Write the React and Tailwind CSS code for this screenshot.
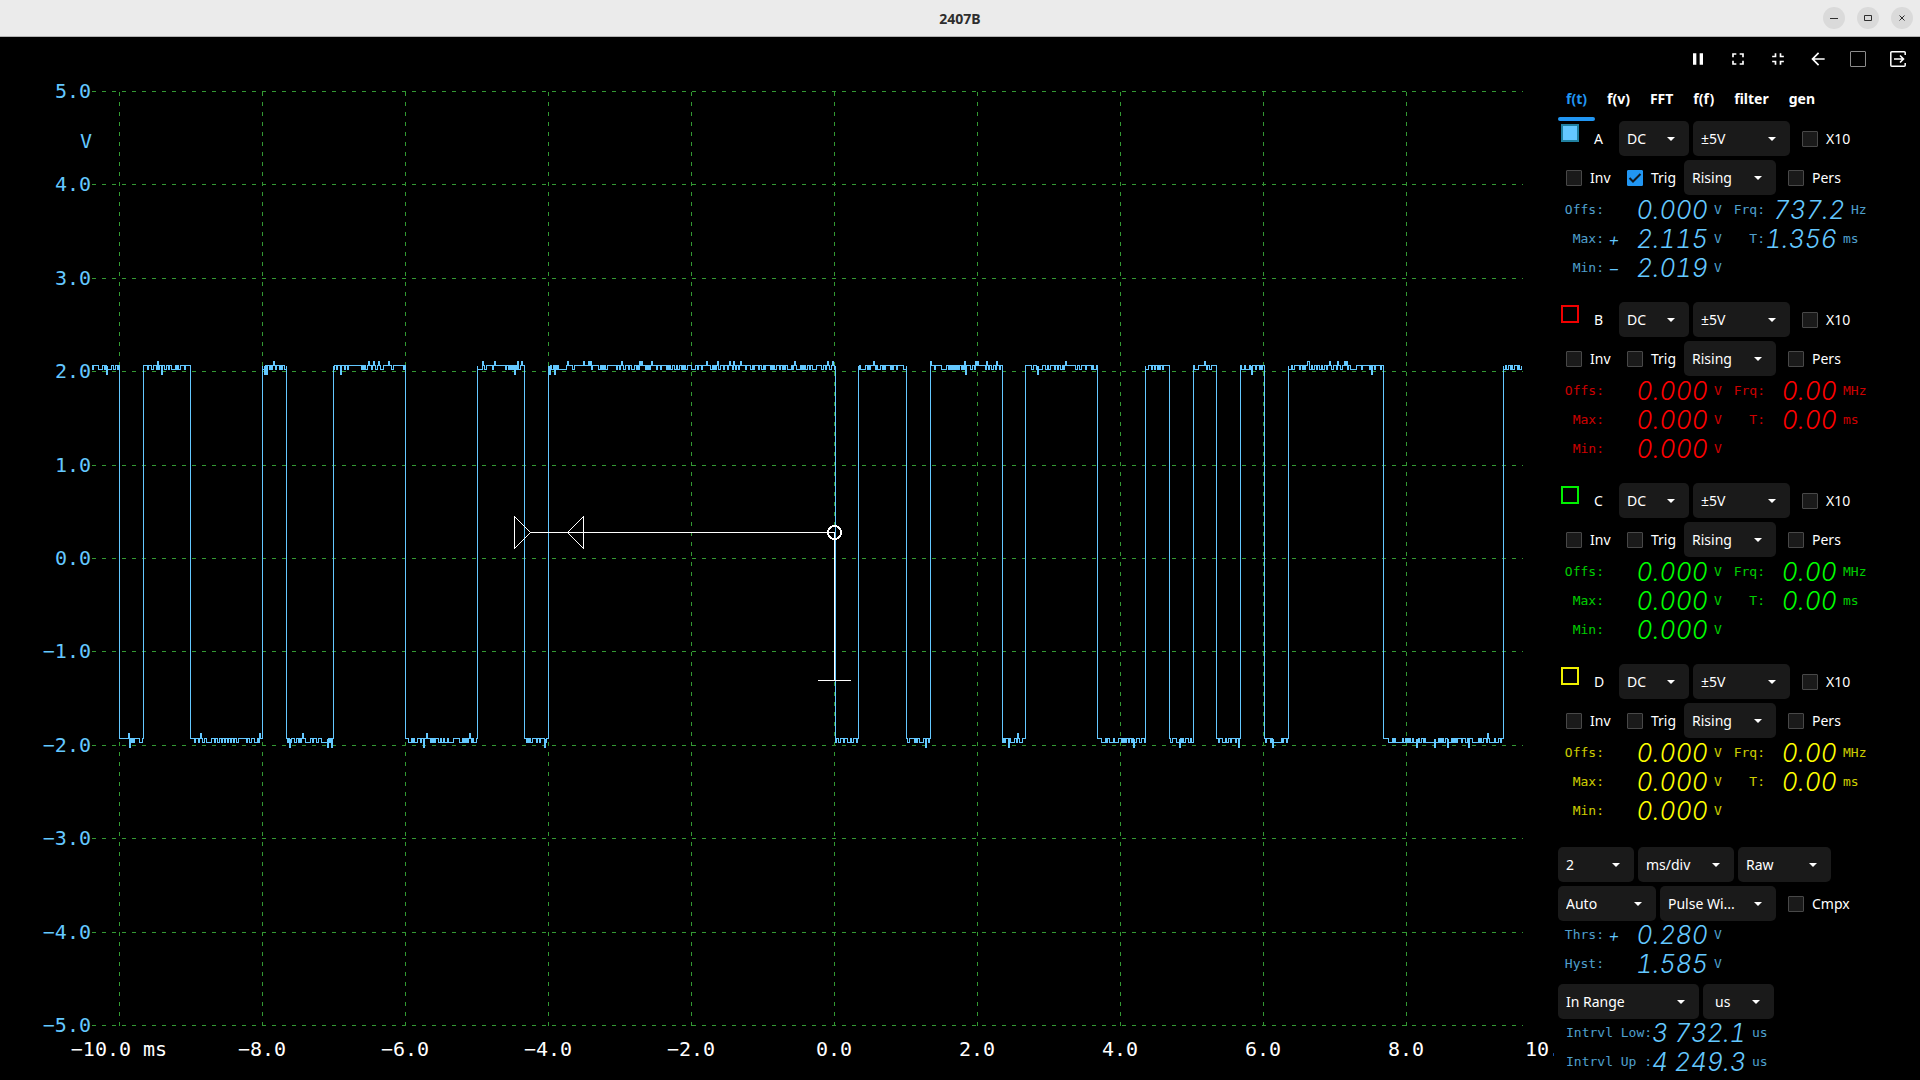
import { useState } from "react";
import clsx from "clsx";
import { MdArrowBack, MdFullscreen, MdFullscreenExit, MdPause } from "react-icons/md";

const HIGH = 365;
const HIGH_DIP = 369;
const LOW = 738;
const LOW_DIP = 742;

// One entry per logic level: from/to in px, then excursions as [start, end, y].
// An excursion without a y goes to the neighbouring ADC step.
const PULSES = [
  { high: true, from: 91, to: 119, steps: [[92, 93], [98, 102], [104, 105], [106, 107, 374], [107, 111], [113, 115], [117, 118]] },
  { high: false, from: 119, to: 143, steps: [[128, 129, 733], [129, 130, 747], [131, 132], [133, 134], [139, 142]] },
  { high: true, from: 143, to: 190, steps: [[147, 148], [151, 153], [156, 157], [157, 158, 361], [158, 159], [161, 162, 374], [164, 166], [168, 169], [171, 175], [176, 177], [178, 180], [184, 185]] },
  { high: false, from: 190, to: 262, steps: [[194, 195], [198, 199], [200, 201, 733], [202, 204], [206, 211], [214, 215], [217, 219], [221, 222], [224, 225], [227, 228], [230, 231], [233, 234], [236, 238], [246, 247], [249, 251], [254, 257], [258, 259], [259, 260, 733]] },
  { high: true, from: 262, to: 286, steps: [[262, 264], [264, 265, 374], [266, 267, 374], [269, 270], [271, 272], [273, 274, 361], [275, 276], [279, 280], [281, 282], [284, 286]] },
  { high: false, from: 286, to: 333, steps: [[287, 288], [289, 290, 747], [290, 291], [294, 296], [298, 299], [300, 301], [302, 303, 733], [305, 310], [312, 313], [316, 318], [321, 327], [327, 328, 747], [329, 330], [331, 332, 747]] },
  { high: true, from: 333, to: 405, steps: [[333, 334], [336, 337], [340, 341, 374], [344, 345], [347, 348], [361, 362], [363, 364], [365, 367], [368, 369, 361], [371, 372], [373, 374, 361], [375, 377], [378, 379, 361], [380, 383], [388, 389, 361], [391, 393], [403, 404]] },
  { high: false, from: 405, to: 477, steps: [[408, 411], [412, 413], [414, 417], [420, 421], [423, 424, 747], [426, 427, 733], [430, 431], [432, 433], [434, 435], [438, 440], [441, 443], [444, 447], [448, 453], [459, 462], [463, 464], [465, 466], [467, 468], [469, 470, 733], [471, 472], [473, 476]] },
  { high: true, from: 477, to: 524, steps: [[477, 482], [482, 483, 361], [484, 486], [492, 493], [494, 495, 361], [505, 506], [508, 509], [510, 511], [512, 513], [514, 515, 374], [516, 517], [517, 518, 361], [518, 520], [521, 522, 361]] },
  { high: false, from: 524, to: 548, steps: [[526, 527], [528, 529], [530, 532], [536, 537], [539, 540], [544, 545, 747], [545, 546]] },
  { high: true, from: 548, to: 835, steps: [[548, 549], [549, 550, 374], [551, 553], [554, 555, 374], [556, 557], [558, 566], [567, 568, 361], [572, 574], [583, 584, 361], [588, 589, 361], [590, 591, 361], [591, 592], [598, 600], [601, 602], [603, 604], [605, 607], [616, 617], [619, 620], [621, 622, 361], [623, 625], [628, 629], [631, 634], [636, 637], [638, 639], [639, 640, 361], [641, 642, 361], [645, 646], [647, 648], [649, 650], [651, 652, 361], [656, 657], [660, 661], [666, 667], [668, 669], [670, 672], [674, 676], [677, 679], [681, 682], [683, 684], [685, 687], [691, 695], [697, 698], [701, 702], [706, 707, 361], [710, 712], [713, 714], [715, 716], [717, 718, 361], [718, 720], [723, 724], [727, 728], [729, 730, 361], [732, 733], [733, 734, 361], [735, 736], [738, 739], [740, 741, 361], [745, 746], [750, 752], [753, 754], [758, 759], [761, 763], [764, 765], [770, 771], [772, 773], [774, 776], [779, 780], [782, 783], [784, 785], [787, 791], [792, 793], [794, 795, 361], [796, 800], [801, 802], [803, 804], [805, 807], [809, 810], [812, 816], [821, 823], [825, 826], [827, 828, 361], [829, 831], [832, 833, 361], [834, 835]] },
  { high: false, from: 835, to: 858, steps: [[835, 836], [838, 840], [843, 844], [847, 850], [851, 853], [856, 857]] },
  { high: true, from: 858, to: 906, steps: [[858, 859], [860, 865], [867, 868], [869, 870], [873, 874, 361], [875, 876], [877, 880], [882, 883], [884, 885], [890, 891], [892, 893], [896, 897], [903, 906]] },
  { high: false, from: 906, to: 930, steps: [[907, 909], [914, 915], [916, 917], [919, 923], [925, 926, 747], [928, 929]] },
  { high: true, from: 930, to: 1002, steps: [[930, 931, 361], [934, 935], [941, 946], [948, 949], [950, 951], [952, 953], [954, 955], [956, 957], [958, 959], [961, 962], [963, 964], [964, 965, 361], [965, 966, 374], [970, 972], [974, 975], [975, 976, 361], [977, 978, 361], [985, 986], [986, 987, 361], [988, 989], [991, 993], [995, 996], [996, 997, 361], [999, 1000]] },
  { high: false, from: 1002, to: 1025, steps: [[1002, 1003], [1004, 1005], [1008, 1009, 747], [1010, 1014], [1016, 1017], [1017, 1018, 733], [1019, 1022]] },
  { high: true, from: 1025, to: 1097, steps: [[1031, 1033], [1036, 1037], [1037, 1038, 374], [1038, 1042], [1045, 1047], [1048, 1050], [1054, 1055], [1057, 1058], [1060, 1062], [1063, 1064], [1065, 1066, 361], [1075, 1077], [1079, 1081], [1085, 1086], [1091, 1092], [1093, 1096]] },
  { high: false, from: 1097, to: 1145, steps: [[1101, 1105], [1106, 1107], [1109, 1113], [1114, 1118], [1121, 1122], [1123, 1124], [1125, 1126], [1128, 1129], [1131, 1132], [1133, 1134, 747], [1134, 1136], [1139, 1141], [1144, 1145]] },
  { high: true, from: 1145, to: 1169, steps: [[1145, 1148], [1151, 1152], [1154, 1155], [1157, 1158], [1159, 1160], [1162, 1163]] },
  { high: false, from: 1169, to: 1193, steps: [[1170, 1172], [1176, 1179], [1179, 1180, 747], [1181, 1182], [1183, 1185], [1188, 1190], [1191, 1193]] },
  { high: true, from: 1193, to: 1216, steps: [[1194, 1198], [1204, 1205, 361], [1206, 1207], [1209, 1211]] },
  { high: false, from: 1216, to: 1240, steps: [[1218, 1219], [1222, 1225], [1226, 1228], [1230, 1231], [1235, 1236], [1238, 1239, 747]] },
  { high: true, from: 1240, to: 1264, steps: [[1241, 1244], [1245, 1249], [1250, 1251], [1251, 1252, 374], [1255, 1256], [1259, 1260], [1261, 1262]] },
  { high: false, from: 1264, to: 1288, steps: [[1265, 1266], [1270, 1271], [1272, 1273, 747], [1273, 1281], [1282, 1283], [1286, 1287]] },
  { high: true, from: 1288, to: 1383, steps: [[1288, 1291], [1292, 1294], [1299, 1300], [1302, 1303], [1304, 1305], [1307, 1309, 361], [1309, 1311], [1312, 1314], [1316, 1317], [1319, 1321], [1322, 1324], [1326, 1327], [1329, 1330, 361], [1331, 1333], [1336, 1337], [1337, 1338, 361], [1340, 1342], [1344, 1345, 361], [1346, 1347, 361], [1347, 1348], [1350, 1356], [1361, 1362], [1369, 1370], [1371, 1372, 374], [1374, 1375], [1380, 1381]] },
  { high: false, from: 1383, to: 1503, steps: [[1388, 1392], [1393, 1394], [1395, 1402], [1403, 1405], [1406, 1407], [1408, 1409], [1410, 1412], [1413, 1416], [1416, 1417, 747], [1417, 1418], [1419, 1421], [1423, 1424], [1425, 1434], [1434, 1435, 747], [1435, 1438], [1439, 1440], [1441, 1442], [1443, 1445], [1447, 1448, 747], [1448, 1451], [1452, 1453], [1454, 1455], [1456, 1457], [1461, 1462], [1465, 1467], [1468, 1469, 747], [1472, 1478], [1479, 1480], [1481, 1483], [1486, 1487], [1487, 1488, 733], [1489, 1494], [1495, 1498], [1500, 1501]] },
  { high: true, from: 1503, to: 1521, steps: [[1503, 1505], [1506, 1508], [1510, 1511], [1512, 1514], [1517, 1518], [1519, 1521]] }
];

const TRACE = PULSES.reduce((path, pulse) => {
  const rest = pulse.high ? HIGH : LOW;
  const dip = pulse.high ? HIGH_DIP : LOW_DIP;
  const steps = pulse.steps.map(([a, b, y]) => `H${a}V${y || dip}H${b}V${rest}`).join("");
  const start = path ? `H${pulse.from}V${rest}` : `M${pulse.from} ${rest}`;
  return `${path}${start}${steps}H${pulse.to}`;
}, "");

const VOLT_TICKS = [
  { y: 91, label: "5.0" },
  { y: 184, label: "4.0" },
  { y: 278, label: "3.0" },
  { y: 371, label: "2.0" },
  { y: 465, label: "1.0" },
  { y: 558, label: "0.0" },
  { y: 651, label: "−1.0" },
  { y: 745, label: "−2.0" },
  { y: 838, label: "−3.0" },
  { y: 932, label: "−4.0" },
  { y: 1025, label: "−5.0" }
];

const TIME_TICKS = [
  { x: 119, label: "−10.0 ms" },
  { x: 262, label: "−8.0" },
  { x: 405, label: "−6.0" },
  { x: 548, label: "−4.0" },
  { x: 691, label: "−2.0" },
  { x: 834, label: "0.0" },
  { x: 977, label: "2.0" },
  { x: 1120, label: "4.0" },
  { x: 1263, label: "6.0" },
  { x: 1406, label: "8.0" }
];

const ZERO = [
  { label: "Offs:", value: "0.000", unit: "V", label2: "Frq:", value2: "0.00", unit2: "MHz" },
  { label: "Max:", value: "0.000", unit: "V", label2: "T:", value2: "0.00", unit2: "ms" },
  { label: "Min:", value: "0.000", unit: "V" }
];

const CHANNELS = [
  {
    name: "A",
    on: true,
    trig: true,
    text: "text-[#64c8ff]",
    box: "border-[#2080a0] checked:bg-[#64c8ff]",
    rows: [
      { label: "Offs:", value: "0.000", unit: "V", label2: "Frq:", value2: "737.2", unit2: "Hz", wide: true },
      { label: "Max:", sign: "+", value: "2.115", unit: "V", label2: "T:", value2: "1.356", unit2: "ms" },
      { label: "Min:", sign: "−", value: "2.019", unit: "V" }
    ]
  },
  { name: "B", text: "text-[#ff0000]", box: "border-[#f00000] checked:bg-[#ff0000]", rows: ZERO },
  { name: "C", text: "text-[#00ff00]", box: "border-[#00f000] checked:bg-[#00ff00]", rows: ZERO },
  { name: "D", text: "text-[#ffff00]", box: "border-[#f0f000] checked:bg-[#ffff00]", rows: ZERO }
];

const TABS = ["f(t)", "f(v)", "FFT", "f(f)", "filter", "gen"];

function TitleBar() {
  return (
    <header className="grid h-[37px] grid-cols-[1fr_auto_1fr] items-center border-b border-[#b4b4b4] bg-[#ebebeb] px-[7px] text-[#2e2e2e]">
      <span />
      <h1 className="pt-0.5 text-sm font-bold">2407B</h1>
      <div className="flex justify-end gap-3">
        <WindowButton label="Minimize">
          <path d="M7 11.5h8" />
        </WindowButton>
        <WindowButton label="Maximize">
          <path d="M7.5 8.5h7v5h-7z" />
        </WindowButton>
        <WindowButton label="Close">
          <path d="M8.5 8.5l5 5M13.5 8.5l-5 5" />
        </WindowButton>
      </div>
    </header>
  );
}

function WindowButton({ label, children }) {
  return (
    <button type="button" aria-label={label} className="h-[22px] w-[22px] rounded-full bg-[#dadada]">
      <svg viewBox="0 0 22 22" className="h-full w-full fill-none stroke-current">
        {children}
      </svg>
    </button>
  );
}

function Plot() {
  return (
    <svg
      viewBox="0 37 1554 1043"
      className="block h-auto w-full font-['DejaVu_Sans_Mono',monospace] text-[20px]"
      role="img"
      aria-label="Channel A voltage over time"
    >
      <g transform="translate(0.5 0.5)" fill="none" shapeRendering="crispEdges">
        <g stroke="#339933" strokeDasharray="4 6">
          {VOLT_TICKS.map((t) => (
            <path key={t.y} d={`M91 ${t.y}H1522`} />
          ))}
          {TIME_TICKS.map((t) => (
            <path key={t.x} d={`M${t.x} 91V1025`} />
          ))}
        </g>
        <path d={TRACE} stroke="#64c8ff" />
        <g stroke="#ffffff">
          <path d="M514 516V548L530 532Z" />
          <path d="M583 516V548L567 532Z" />
          <path d="M530 532H834V680" />
          <path d="M817 680H850" />
          <circle cx="834" cy="532" r="6.5" strokeWidth="2" />
        </g>
      </g>
      <g fill="#64c8ff" textAnchor="end">
        {VOLT_TICKS.map((t) => (
          <text key={t.y} x="91" y={t.y + 7}>{t.label}</text>
        ))}
        <text x="92" y="148">V</text>
      </g>
      <g fill="#ffffff" textAnchor="middle">
        {TIME_TICKS.map((t) => (
          <text key={t.x} x={t.x} y="1056">{t.label}</text>
        ))}
        <text x="1525" y="1056" textAnchor="start">10.0</text>
      </g>
    </svg>
  );
}

function Toolbar() {
  const button = "flex h-10 w-10 items-center justify-center";
  return (
    <div className="flex h-11 items-center justify-end pr-0.5">
      <button type="button" aria-label="Pause" className={button}>
        <MdPause size={20} />
      </button>
      <button type="button" aria-label="Full screen" className={button}>
        <MdFullscreen size={20} />
      </button>
      <button type="button" aria-label="Exit full screen" className={button}>
        <MdFullscreenExit size={20} />
      </button>
      <button type="button" aria-label="Back" className={button}>
        <MdArrowBack size={20} />
      </button>
      <label className={button}>
        <input
          type="checkbox"
          aria-label="Select"
          className="h-4 w-4 appearance-none rounded-[1px] border border-[#8c8c8c] checked:bg-[#2196f3]"
        />
      </label>
      <button type="button" aria-label="Exit" className={button}>
        <svg viewBox="0 0 16 16" className="h-4 w-4 fill-none stroke-current">
          <path d="M15.2 4V1.8Q15.2 0.8 14.2 0.8H1.8Q0.8 0.8 0.8 1.8V14.2Q0.8 15.2 1.8 15.2H14.2Q15.2 15.2 15.2 14.2V12" strokeWidth="1.5" />
          <path d="M4 8H13.5M10 4.5L13.5 8L10 11.5" strokeWidth="1.6" />
        </svg>
      </button>
    </div>
  );
}

function Select({ label, value, inset = "pl-2", className }) {
  return (
    <span className={clsx("relative block h-[35px]", className)}>
      <select
        aria-label={label}
        defaultValue={value}
        className={clsx("h-full w-full appearance-none rounded-[5px] bg-[#1a1a1a] text-sm text-white outline-none", inset)}
      >
        <option>{value}</option>
      </select>
      <svg viewBox="0 0 8 4" className="pointer-events-none absolute top-4 right-3.5 h-1 w-2 fill-white">
        <path d="M0 0h8l-4 4z" />
      </svg>
    </span>
  );
}

function Check({ label, checked = false, className }) {
  return (
    <label className={clsx("flex items-center gap-2", className)}>
      <span className="relative block h-4 w-4">
        <input
          type="checkbox"
          defaultChecked={checked}
          className="peer block h-4 w-4 appearance-none rounded-[1px] border border-[#484848] bg-[#1a1a1a] checked:border-[#2196f3] checked:bg-[#2196f3]"
        />
        <svg
          viewBox="0 0 16 16"
          className="pointer-events-none absolute inset-0 hidden h-4 w-4 fill-none stroke-[#101820] stroke-2 peer-checked:block"
        >
          <path d="M2.5 8L6 11.5L13.5 4" />
        </svg>
      </span>
      {label}
    </label>
  );
}

function Digits({ children, className }) {
  return (
    <span className={clsx("flex justify-end font-['Inter',sans-serif] text-[25px] leading-none font-light whitespace-nowrap italic tabular-nums", className)}>
      {children}
    </span>
  );
}

function Reading({ row }) {
  return (
    <div className="flex h-[29px] items-center font-['DejaVu_Sans_Mono',monospace] text-[13px]">
      <span className="w-[46px] text-right opacity-80">{row.label}</span>
      <span className="w-5 text-center font-['Inter',sans-serif] text-lg leading-none font-light italic">{row.sign}</span>
      <Digits className="w-[84px]">{row.value}</Digits>
      <span className="w-6 pl-1.5 opacity-80">{row.unit}</span>
      {row.label2 && (
        <>
          <span className="w-[33px] text-right opacity-80">{row.label2}</span>
          <Digits className={row.wide ? "w-20" : "w-[72px]"}>{row.value2}</Digits>
          <span className="pl-1.5 opacity-80">{row.unit2}</span>
        </>
      )}
    </div>
  );
}

function IntervalReading({ label, value }) {
  return (
    <div className="flex h-[29px] items-center pl-2 font-['DejaVu_Sans_Mono',monospace] text-[13px]">
      <span className="w-[86px] whitespace-pre opacity-80">{label}</span>
      <Digits className="w-[94px]">{value}</Digits>
      <span className="pl-1.5 opacity-80">us</span>
    </div>
  );
}

function Channel({ channel }) {
  return (
    <section>
      <div className="flex h-[35px] items-center">
        <label className="flex h-full w-[61px] items-center gap-[15px] pl-[3px]">
          <input
            type="checkbox"
            defaultChecked={channel.on}
            className={clsx("mt-[3px] h-[18px] w-[18px] appearance-none self-start border-2", channel.box)}
          />
          {channel.name}
        </label>
        <Select label={`${channel.name} coupling`} value="DC" className="mr-1 w-[70px]" />
        <Select label={`${channel.name} range`} value="±5V" className="mr-3 w-[97px]" />
        <Check label="X10" />
      </div>
      <div className="mt-1 flex h-[35px] items-center pl-2">
        <Check label="Inv" className="w-[61px]" />
        <Check label="Trig" checked={channel.trig} className="w-[57px]" />
        <Select label={`${channel.name} trigger slope`} value="Rising" className="mr-3 w-[92px]" />
        <Check label="Pers" />
      </div>
      <div className={clsx("pt-px", channel.text)}>
        {channel.rows.map((row) => (
          <Reading key={row.label} row={row} />
        ))}
      </div>
    </section>
  );
}

function TimebasePanel() {
  return (
    <section className="pt-0.5">
      <div className="flex gap-1">
        <Select label="Time per division" value="2" className="w-[76px]" />
        <Select label="Time unit" value="ms/div" className="w-24" />
        <Select label="Processing" value="Raw" className="w-[93px]" />
      </div>
      <div className="mt-1 flex items-center gap-1">
        <Select label="Trigger mode" value="Auto" className="w-[98px]" />
        <Select label="Trigger type" value="Pulse Wi..." className="w-[116px]" />
        <Check label="Cmpx" className="ml-2" />
      </div>
      <div className="text-[#64c8ff]">
        <Reading row={{ label: "Thrs:", sign: "+", value: "0.280", unit: "V" }} />
        <Reading row={{ label: "Hyst:", value: "1.585", unit: "V" }} />
      </div>
      <div className="mt-[5px] flex gap-1">
        <Select label="Interval condition" value="In Range" className="w-[141px]" />
        <Select label="Interval unit" value="us" inset="pl-3" className="w-[71px]" />
      </div>
      <div className="text-[#64c8ff]">
        <IntervalReading label="Intrvl Low:" value="3 732.1" />
        <IntervalReading label="Intrvl Up :" value="4 249.3" />
      </div>
    </section>
  );
}

export default function App() {
  const [tab, setTab] = useState("f(t)");

  return (
    <div className="flex min-h-screen flex-col bg-black font-['Noto_Sans',sans-serif] text-sm text-white">
      <TitleBar />
      <div className="flex flex-1">
        <main className="min-w-0 flex-1">
          <Plot />
        </main>
        <aside className="w-[366px] shrink-0 pl-1">
          <Toolbar />
          <nav className="flex gap-1">
            {TABS.map((name) => (
              <button
                key={name}
                type="button"
                onClick={() => setTab(name)}
                className={clsx("flex h-10 flex-col font-bold", tab === name && "text-[#2196f3]")}
              >
                <span className="flex flex-1 items-center px-2">{name}</span>
                <span className={clsx("h-1 w-full rounded-full", tab === name && "bg-[#2196f3]")} />
              </button>
            ))}
          </nav>
          <div className="flex flex-col gap-[19px]">
            {CHANNELS.map((channel) => (
              <Channel key={channel.name} channel={channel} />
            ))}
            <TimebasePanel />
          </div>
        </aside>
      </div>
    </div>
  );
}
